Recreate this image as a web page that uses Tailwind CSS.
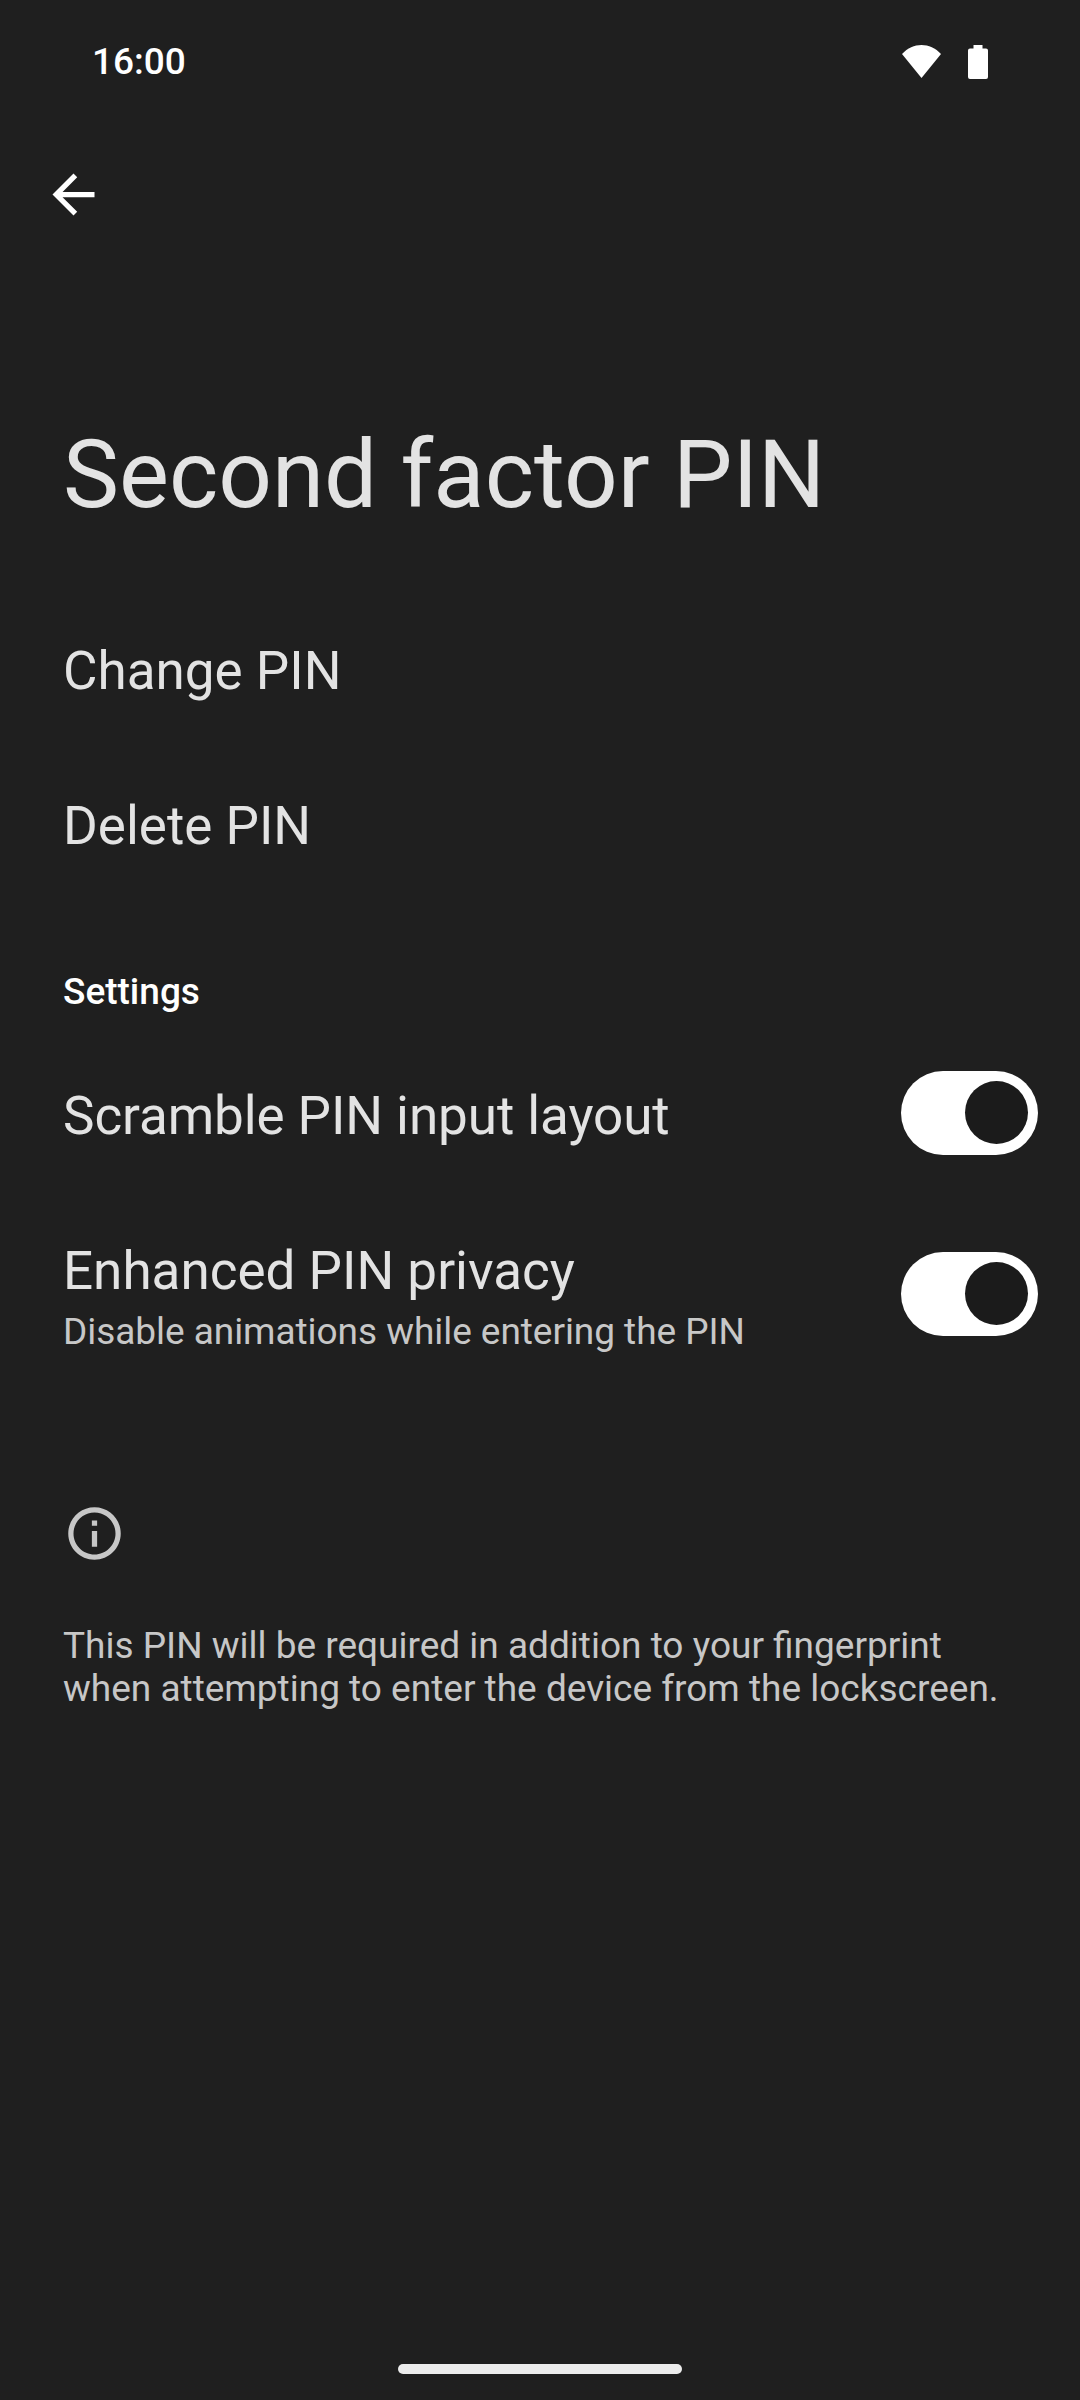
<!DOCTYPE html>
<html lang="en">
<head>
<meta charset="utf-8">
<title>Second factor PIN</title>
<script src="https://cdn.jsdelivr.net/npm/@tailwindcss/browser@4"></script>
</head>
<body class="bg-[#1f1f1f]">
<main class="flex h-[2400px] w-[1080px] flex-col overflow-hidden bg-[#1f1f1f] font-['Roboto',sans-serif] text-[#e3e3e3]">
  <!-- Status bar -->
  <header class="flex h-[124px] items-center justify-between px-[92px] text-white">
    <span class="text-[37px] leading-[44px] font-medium">16:00</span>
    <div class="flex items-start gap-[27px]">
      <svg class="h-[33px] w-[39px]" viewBox="0 0 39 33" fill="currentColor"><path d="M0 9C11-3 28-3 39 9L19.500 33Z"/></svg>
      <svg class="h-[34px] w-[20px]" viewBox="0 0 20 34" fill="currentColor"><path d="M5.500 0h9v3.500H18q2 0 2 2V32q0 2-2 2H2q-2 0-2-2V5.500q0-2 2-2h3.500z"/></svg>
    </div>
  </header>

  <nav class="flex h-[140px] items-center pl-[42px]">
    <svg class="size-[63px] text-white" viewBox="0 0 24 24" fill="currentColor"><path d="M20 11H7.830l5.590-5.590L12 4l-8 8 8 8 1.410-1.410L7.830 13H20z"/></svg>
  </nav>

  <h1 class="mt-[153px] pl-[63px] text-[94.25px] leading-[116px]">Second factor PIN</h1>

  <section class="mt-[60px] flex flex-col pl-[63px] text-[53px] leading-[62px]">
    <div class="flex h-[155px] items-center">Change PIN</div>
    <div class="flex h-[155px] items-center">Delete PIN</div>
  </section>

  <h2 class="mt-[67px] pl-[63px] text-[37px] leading-[44px] font-medium text-white">Settings</h2>

  <section class="mt-[24px] flex flex-col pr-[42px] pl-[63px] text-[53px] leading-[62px]">
    <div class="flex h-[155px] items-center justify-between">
      <span class="tracking-[-0.08px]">Scramble PIN input layout</span>
      <div class="mb-[6px] flex h-[84px] w-[137px] items-start justify-end rounded-full bg-white pt-[10px] pr-[10px]">
        <div class="size-[63px] rounded-full bg-[#1b1b1b]"></div>
      </div>
    </div>
    <div class="flex h-[202px] items-center justify-between">
      <div class="flex flex-col gap-[8px] pt-[6px]">
        <span>Enhanced PIN privacy</span>
        <span class="text-[37px] leading-[44px] tracking-[-0.05px] text-[#c7c7c7]">Disable animations while entering the PIN</span>
      </div>
      <div class="flex h-[84px] w-[137px] items-start justify-end rounded-full bg-white pt-[10px] pr-[10px]">
        <div class="size-[63px] rounded-full bg-[#1b1b1b]"></div>
      </div>
    </div>
  </section>

  <footer class="mt-[107px] flex flex-col gap-[59px] pl-[63px] text-[#c7c7c7]">
    <svg class="size-[63px]" viewBox="0 0 24 24" fill="currentColor"><path d="M11 7h2v2h-2zm0 4h2v6h-2zm1-9C6.480 2 2 6.480 2 12s4.480 10 10 10 10-4.480 10-10S17.520 2 12 2zm0 18c-4.410 0-8-3.590-8-8s3.590-8 8-8 8 3.590 8 8-3.590 8-8 8z"/></svg>
    <p class="text-[37px] leading-[43px]">This PIN will be required in addition to your fingerprint<br>when attempting to enter the device from the lockscreen.</p>
  </footer>

  <!-- Gesture navigation handle -->
  <div class="mt-auto mb-[26px] h-[10px] w-[284px] self-center rounded-full bg-[#ececec]"></div>
</main>
</body>
</html>
